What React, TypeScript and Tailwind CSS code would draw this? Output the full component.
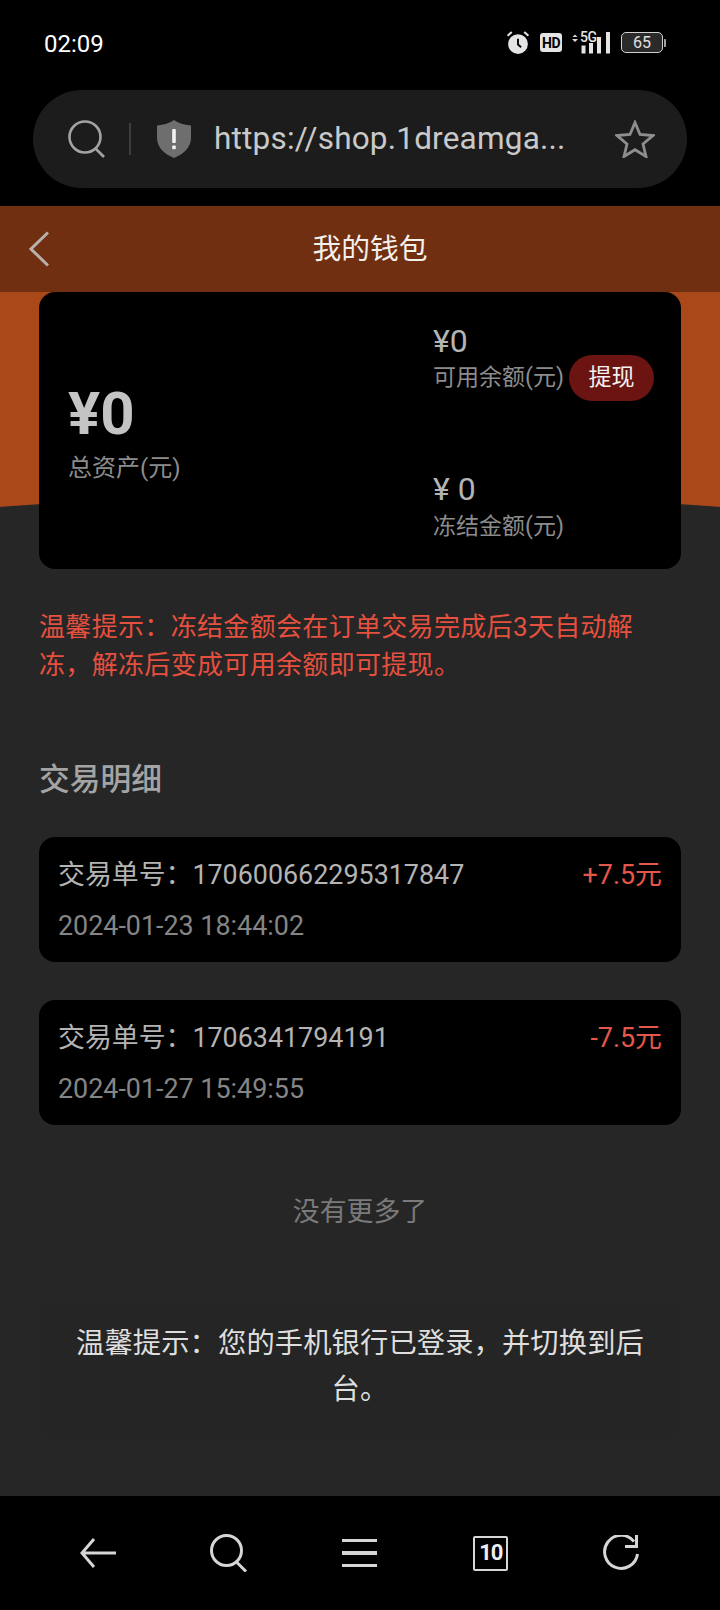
import React from "react"

const sans = "font-['Roboto','Noto_Sans_CJK_SC',sans-serif]"

function StatusIcons() {
  return (
    <div className="flex items-center">
      {/* alarm */}
      <svg width="24" height="25" viewBox="0 0 22 24" className="mr-[10px]">
        <circle cx="11" cy="13.500" r="9.500" fill="#e4e4e4" />
        <path d="M11 8.500V14l3 2.500" stroke="#000" strokeWidth="1.800" fill="none" />
        <path d="M1 5.500 5 2M21 5.500 17 2" stroke="#e4e4e4" strokeWidth="2" fill="none" />
      </svg>
      <div className="mr-[9px] flex h-[19px] w-[22px] items-center justify-center rounded-[3px] bg-[#e4e4e4] text-[14px] leading-none font-bold tracking-[-0.5px] text-black">
        HD
      </div>
      <div className="relative mr-[10px] h-[24px] w-[40px]">
        <svg width="40" height="24" viewBox="0 0 40 24" className="absolute top-0 left-0">
          <path d="M1.500 6 4 3.500 6.500 6zM1 8h6l-3 3z" fill="#d8d8d8" />
          <rect x="10.500" y="14.500" width="4" height="8" fill="#e4e4e4" />
          <rect x="18" y="12" width="4" height="10.500" fill="#e4e4e4" />
          <rect x="26" y="6" width="4" height="16.500" fill="#e4e4e4" />
          <rect x="35" y="1" width="4" height="21.500" fill="#e4e4e4" />
        </svg>
        <span className="absolute top-[-1px] left-[9px] text-[14px] leading-[14px] font-medium tracking-[-0.5px] text-[#e4e4e4]">5G</span>
      </div>
      <div className="flex items-center">
        <div className="flex h-[21px] w-[42px] items-center justify-center rounded-[5px] border-[1.5px] border-[#d0d0d0] bg-[#2a2a2a] text-[16px] leading-none text-[#e0e0e0]">
          65
        </div>
        <div className="ml-[1px] h-[8px] w-[2px] rounded-r-[1px] bg-[#a0a0a0]" />
      </div>
    </div>
  )
}

function UrlBar() {
  return (
    <div className="mx-[33px] flex h-[98px] items-center rounded-[49px] bg-[#1c1c1c] pr-[32px] pl-[35px]">
      <svg width="38" height="38" viewBox="0 0 38 38" fill="none" stroke="#a3a3a3" strokeWidth="2.600" className="shrink-0">
        <circle cx="17" cy="17" r="15.500" />
        <path d="M27.500 28.500 36 37" />
      </svg>
      <div className="ml-[23px] h-[32px] w-[2px] shrink-0 bg-[#3d3d3d]" />
      <svg width="34" height="38" viewBox="0 0 34 38" className="ml-[26px] shrink-0">
        <path d="M17 0c4 3 10 5 17 5.500V18c0 9-7 16-17 20C7 34 0 27 0 18V5.500C7 5 13 3 17 0z" fill="#6e6e6e" />
        <rect x="15.200" y="9" width="3.600" height="14" rx="1" fill="#f2f2f2" />
        <rect x="15.200" y="25.500" width="3.600" height="3.800" rx="1" fill="#f2f2f2" />
      </svg>
      <span className="ml-[23px] flex-1 text-[31.500px] leading-none tracking-[0.2px] whitespace-nowrap text-[#c9c9c9]">
        https://shop.1dreamga...
      </span>
      <svg width="40" height="38" viewBox="0 0 40 38" fill="none" stroke="#8e8e8e" strokeWidth="2.800" strokeLinejoin="miter" className="shrink-0">
        <path d="M20 2.500 25 14.500l13 1-10 8.500 3 12.500-11-6.800-11 6.800 3-12.500L2 15.500l13-1z" />
      </svg>
    </div>
  )
}

function TradeCard({ no, date, amount }: { no: string; date: string; amount: string }) {
  return (
    <div className="mx-[39px] h-[124.500px] rounded-[16px] bg-black px-[19px] pt-[19px]">
      <div className="flex items-center justify-between text-[26.880px] leading-[38px]">
        <span className="text-[#b4b4b4]">交易单号：{no}</span>
        <span className="text-[#e4574a]">{amount}</span>
      </div>
      <div className="mt-[13px] text-[26.880px] leading-[38px] text-[#858585]">{date}</div>
    </div>
  )
}

function BottomNav() {
  const stroke = "#d6d6d6"
  return (
    <div className="flex h-[114px] items-center bg-black px-[33px]">
      <div className="flex w-[131px] justify-center">
        <svg width="38" height="38" viewBox="0 0 38 38" fill="none" stroke={stroke} strokeWidth="3">
          <path d="M37 19H3M15 5 3 19l12 14" />
        </svg>
      </div>
      <div className="flex w-[131px] justify-center">
        <svg width="38" height="38" viewBox="0 0 38 38" fill="none" stroke={stroke} strokeWidth="3">
          <circle cx="16.500" cy="16.500" r="15" />
          <path d="M26.500 28 36 37.500" />
        </svg>
      </div>
      <div className="flex w-[131px] flex-col items-center gap-[9px]">
        <div className="h-[3.500px] w-[35px] bg-[#d6d6d6]" />
        <div className="h-[3.500px] w-[35px] bg-[#d6d6d6]" />
        <div className="h-[3.500px] w-[35px] bg-[#d6d6d6]" />
      </div>
      <div className="flex w-[131px] justify-center">
        <div className="flex h-[35px] w-[35px] items-center justify-center rounded-[2px] border-[2.500px] border-[#d6d6d6] text-[22px] leading-none font-bold tracking-[-1px] text-[#eeeeee]">
          10
        </div>
      </div>
      <div className="flex w-[131px] justify-center">
        <svg width="36" height="36" viewBox="0 0 36 36" fill="none" stroke={stroke} strokeWidth="3" className="mr-[2px]">
          <path d="M31 6.500A16.500 16.500 0 1 0 34.500 19" />
          <path d="M22 11.500h11.500V0" />
        </svg>
      </div>
    </div>
  )
}

export default function App() {
  return (
    <div className={`flex h-[1610px] w-[720px] flex-col overflow-hidden bg-black ${sans}`}>
      <div className="flex h-[90px] items-start justify-between pt-[31px] pr-[52px] pl-[44px]">
        <span className="text-[24px] leading-[26px] text-[#ffffff]">02:09</span>
        <div className="mt-[-1px] mr-[2px]"><StatusIcons /></div>
      </div>
      <UrlBar />
      <div className="mt-[18px] flex h-[86px] items-center bg-[#6f2f10] pr-[29px] pl-[29px]">
        <svg width="20" height="36" viewBox="0 0 20 36" fill="none" stroke="#b8b0aa" strokeWidth="3">
          <path d="M19 1.500 2 18l17 16.500" />
        </svg>
        <div className="flex-1 text-center text-[28.800px] leading-none text-[#f4f0ec]">我的钱包</div>
      </div>

      <div className="relative flex-1 overflow-hidden bg-[#262626]">
        {/* orange header wash with arched edge */}
        <div className="absolute top-0 left-0 h-[240px] w-full bg-[#a9491a]" />
        <div className="absolute top-[203px] left-[-400px] h-[200px] w-[1520px] rounded-[50%] bg-[#262626]" />
        <div className="absolute top-[260px] left-0 h-[1100px] w-full bg-[#262626]" />

        <div className="relative">
          <div className="mx-[39px] flex h-[277px] items-stretch rounded-[16px] bg-black">
            <div className="w-[394px] pt-[90px] pl-[29px]">
              <div className="text-[60px] leading-[64px] font-bold text-[#c4c4c4]">¥0</div>
              <div className="mt-[5px] text-[24px] leading-[34px] text-[#8c8c8c]">总资产(元)</div>
            </div>
            <div className="flex-1 pt-[28px]">
              <div className="text-[32px] leading-[42px] text-[#b4b4b4]">¥0</div>
              <div className="mt-[-7px] flex h-[46px] items-center">
                <span className="w-[136px] text-[23.040px] leading-none text-[#8c8c8c]">可用余额(元)</span>
                <span className="flex h-[46px] w-[85px] items-center justify-center rounded-[23px] bg-[#6b1411] text-[23.040px] leading-none text-[#f2f2f2]">提现</span>
              </div>
              <div className="mt-[67px] text-[32px] leading-[42px] text-[#b4b4b4]">¥ 0</div>
              <div className="text-[23.040px] leading-[34px] text-[#8c8c8c]">冻结金额(元)</div>
            </div>
          </div>

          <p className="mx-[39px] mt-[39px] text-[26px] leading-[38px] tracking-[0.33px] text-[#e5503f]">
            温馨提示：冻结金额会在订单交易完成后3天自动解冻，解冻后变成可用余额即可提现。
          </p>

          <h2 className="mx-[39px] mt-[76px] text-[30.720px] leading-[40px] font-medium text-[#a4a4a4]">交易明细</h2>

          <div className="mt-[37px] flex flex-col gap-[38.500px]">
            <TradeCard no="170600662295317847" date="2024-01-23 18:44:02" amount="+7.5元" />
            <TradeCard no="1706341794191" date="2024-01-27 15:49:55" amount="-7.5元" />
          </div>

          <div className="mt-[67px] text-center text-[26.880px] leading-[40px] text-[#7a7a7a]">没有更多了</div>

          <div className="mx-[39px] mt-[71px] h-[134px] rounded-[16px] bg-[#252525] px-[26px] pt-[18px] text-center text-[28.300px] leading-[46px] tracking-[0.1px] text-[#dedede]">
            温馨提示：您的手机银行已登录，并切换到后台。
          </div>
        </div>
      </div>

      <BottomNav />
    </div>
  )
}
